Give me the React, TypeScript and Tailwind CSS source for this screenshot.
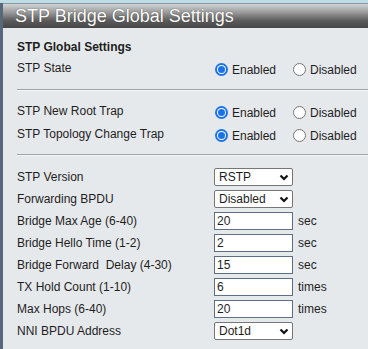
import React from "react";

const Radio = ({ checked }: { checked: boolean }) =>
  checked ? (
    <span className="flex h-[13px] w-[13px] items-center justify-center rounded-full bg-[#1a73e8]">
      <span className="flex h-[9px] w-[9px] items-center justify-center rounded-full bg-white">
        <span className="h-[7px] w-[7px] rounded-full bg-[#1a73e8]" />
      </span>
    </span>
  ) : (
    <span className="h-[13px] w-[13px] rounded-full border border-[#767676] bg-white" />
  );

const RadioRow = ({ label }: { label: string }) => (
  <div className="flex h-[18px] items-center">
    <div className="w-[198px] -mt-[2px]">{label}</div>
    <div className="flex items-center gap-[4px]">
      <Radio checked />
      <span className="w-[43px] mt-[1px]">Enabled</span>
    </div>
    <div className="ml-[18px] flex items-center gap-[4px]">
      <Radio checked={false} />
      <span className="mt-[1px]">Disabled</span>
    </div>
  </div>
);

const Chevron = () => (
  <svg width="10" height="7" viewBox="0 0 10 7" className="shrink-0">
    <polyline points="1.5,1.5 5,5 8.5,1.5" fill="none" stroke="#111" strokeWidth="2.2" />
  </svg>
);

const SelectRow = ({ label, value }: { label: string; value: string }) => (
  <div className="flex h-[18px] items-center">
    <div className="w-[197px]">{label}</div>
    <div className="flex h-[18px] w-[79px] items-center justify-between rounded-[2px] border border-[#767676] bg-white pl-[4px] pr-[3px]">
      <span>{value}</span>
      <Chevron />
    </div>
  </div>
);

const InputRow = ({ label, value, unit }: { label: string; value: string; unit: string }) => (
  <div className="flex h-[18px] items-center">
    <div className="w-[197px] whitespace-pre">{label}</div>
    <div className="flex h-[18px] w-[79px] items-center border border-[#5d6e85] bg-white pl-[2px]">
      {value}
    </div>
    <span className="ml-[5px]">{unit}</span>
  </div>
);

const Divider = () => (
  <div className="h-[2px] border-t border-[#9ea4aa] bg-[#f3f5f6]" />
);

export default function App() {
  return (
    <div
      className="h-[349px] w-[368px] overflow-hidden bg-[#e6e9ec] text-[12px] leading-[16px] text-[#1e1e1e]"
      style={{ fontFamily: '"Liberation Sans", Arial, sans-serif' }}
    >
      <div className="h-[3px] bg-[#bfdde6]" />
      <div className="flex h-[349px] border-l-[3px] border-[#56687a]">
        <div className="flex w-full flex-col">
          <div className="flex h-[25px] items-center border-t border-[#8a98a2] bg-[linear-gradient(#d2d4d7_0%,#9a9a9a_35%,#5a5a5a_70%,#474747_100%)] pl-[12px] text-[18px] leading-[20px] text-white [text-shadow:0_0_1px_#333]">
            STP Bridge Global Settings
          </div>
          <div className="pl-[14px]">
            <div className="mt-[11px] font-bold">STP Global Settings</div>
            <div className="mt-[5px]">
              <RadioRow label="STP State" />
            </div>
            <div className="mt-[11px]">
              <Divider />
            </div>
            <div className="mt-[12px] flex flex-col gap-[5px]">
              <RadioRow label="STP New Root Trap" />
              <RadioRow label="STP Topology Change Trap" />
            </div>
            <div className="mt-[10px]">
              <Divider />
            </div>
            <div className="mt-[12px] flex flex-col gap-[4px]">
              <SelectRow label="STP Version" value="RSTP" />
              <SelectRow label="Forwarding BPDU" value="Disabled" />
              <InputRow label="Bridge Max Age (6-40)" value="20" unit="sec" />
              <InputRow label="Bridge Hello Time (1-2)" value="2" unit="sec" />
              <InputRow label="Bridge Forward  Delay (4-30)" value="15" unit="sec" />
              <InputRow label="TX Hold Count (1-10)" value="6" unit="times" />
              <InputRow label="Max Hops (6-40)" value="20" unit="times" />
              <SelectRow label="NNI BPDU Address" value="Dot1d" />
            </div>
          </div>
        </div>
      </div>
    </div>
  );
}
